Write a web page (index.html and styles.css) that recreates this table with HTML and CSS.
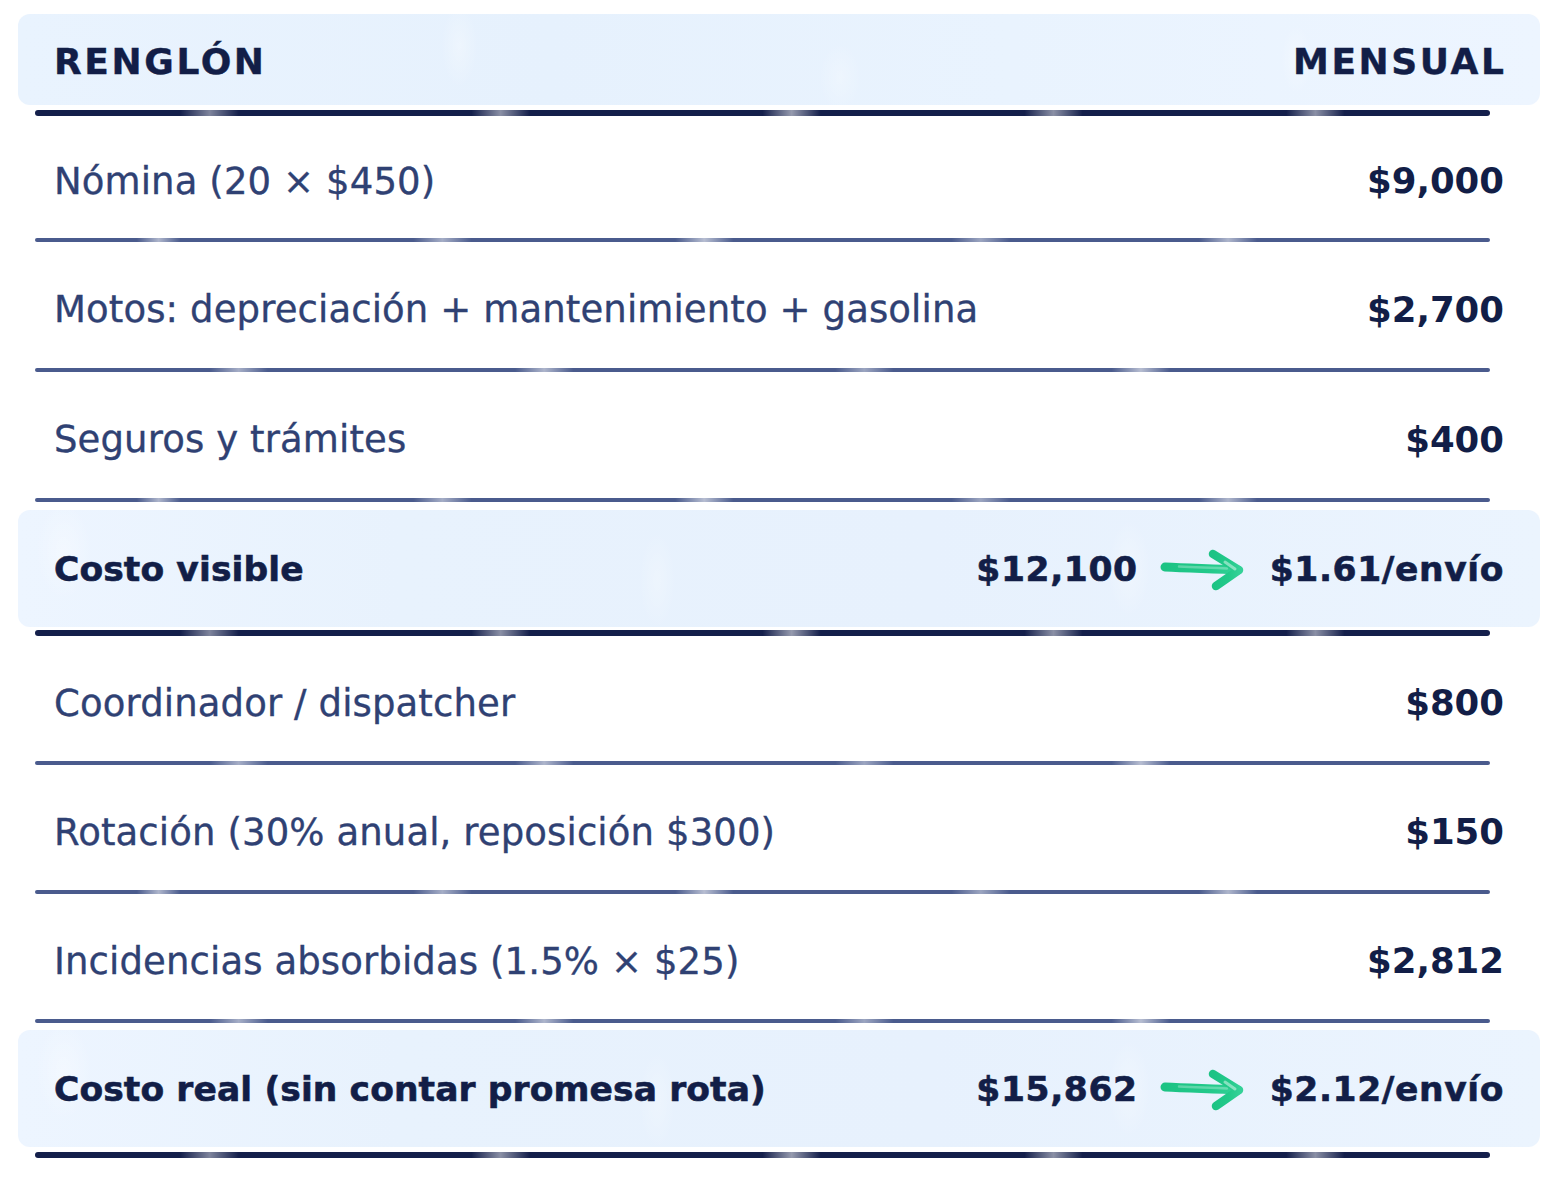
FILE: index.html
```html
<!DOCTYPE html>
<html lang="es">
<head>
<meta charset="utf-8">
<title>Costo de flota propia</title>
<link rel="stylesheet" href="styles.css">
</head>
<body>
<main class="cost-table">
  <div class="row row--head">
    <span class="head-label">RENGLÓN</span>
    <span class="head-label head-label--right">MENSUAL</span>
  </div>
  <div class="rule rule--dark rule--after-head"></div>

  <div class="row row--first">
    <span class="label">Nómina (20 × $450)</span>
    <span class="value">$9,000</span>
  </div>
  <div class="rule"></div>

  <div class="row">
    <span class="label">Motos: depreciación + mantenimiento + gasolina</span>
    <span class="value">$2,700</span>
  </div>
  <div class="rule rule--alt"></div>

  <div class="row">
    <span class="label">Seguros y trámites</span>
    <span class="value">$400</span>
  </div>
  <div class="rule"></div>

  <div class="row row--total">
    <span class="total-label">Costo visible</span>
    <span class="total-value">
      <span>$12,100</span>
      <svg class="arrow" viewBox="0 0 86 44" aria-hidden="true">
        <defs>
          <linearGradient id="arrowGrad1" x1="0" y1="0" x2="1" y2="0">
            <stop offset="0" stop-color="#1cc384"/>
            <stop offset="0.6" stop-color="#22c98a"/>
            <stop offset="1" stop-color="#34d197"/>
          </linearGradient>
        </defs>
        <path d="M6 19 C 30 20.5, 56 20.5, 79 22" fill="none" stroke="url(#arrowGrad1)" stroke-width="9" stroke-linecap="round"/>
        <path d="M54 6 L80 22 L57 38" fill="none" stroke="url(#arrowGrad1)" stroke-width="8.5" stroke-linecap="round" stroke-linejoin="round"/>
        <path d="M20 18.5 C 40 19.5, 55 19.5, 68 20.5" fill="none" stroke="#ffffff" stroke-opacity="0.28" stroke-width="2.5" stroke-linecap="round"/>
        <path d="M66 14 L76 21" fill="none" stroke="#ffffff" stroke-opacity="0.45" stroke-width="3" stroke-linecap="round"/>
      </svg>
      <span>$1.61/envío</span>
    </span>
  </div>
  <div class="rule rule--dark rule--after-total"></div>

  <div class="row row--mid">
    <span class="label">Coordinador / dispatcher</span>
    <span class="value">$800</span>
  </div>
  <div class="rule rule--alt"></div>

  <div class="row row--mid">
    <span class="label">Rotación (30% anual, reposición $300)</span>
    <span class="value">$150</span>
  </div>
  <div class="rule"></div>

  <div class="row row--mid">
    <span class="label">Incidencias absorbidas (1.5% × $25)</span>
    <span class="value">$2,812</span>
  </div>
  <div class="rule rule--alt"></div>

  <div class="row row--total row--total-last">
    <span class="total-label">Costo real (sin contar promesa rota)</span>
    <span class="total-value">
      <span>$15,862</span>
      <svg class="arrow" viewBox="0 0 86 44" aria-hidden="true">
        <defs>
          <linearGradient id="arrowGrad2" x1="0" y1="0" x2="1" y2="0">
            <stop offset="0" stop-color="#1cc384"/>
            <stop offset="0.6" stop-color="#22c98a"/>
            <stop offset="1" stop-color="#34d197"/>
          </linearGradient>
        </defs>
        <path d="M6 19 C 30 20.5, 56 20.5, 79 22" fill="none" stroke="url(#arrowGrad2)" stroke-width="9" stroke-linecap="round"/>
        <path d="M54 6 L80 22 L57 38" fill="none" stroke="url(#arrowGrad2)" stroke-width="8.5" stroke-linecap="round" stroke-linejoin="round"/>
        <path d="M20 18.5 C 40 19.5, 55 19.5, 68 20.5" fill="none" stroke="#ffffff" stroke-opacity="0.28" stroke-width="2.5" stroke-linecap="round"/>
        <path d="M66 14 L76 21" fill="none" stroke="#ffffff" stroke-opacity="0.45" stroke-width="3" stroke-linecap="round"/>
      </svg>
      <span>$2.12/envío</span>
    </span>
  </div>
  <div class="rule rule--dark rule--end"></div>
</main>
</body>
</html>
```

FILE: styles.css
```css
html, body {
  margin: 0;
  padding: 0;
  background: #ffffff;
}

body {
  font-family: "DejaVu Sans", "Noto Sans", sans-serif;
}

.cost-table {
  width: 1522px;
  margin: 14px 0 0 18px;
  display: flex;
  flex-direction: column;
}

.row {
  display: flex;
  align-items: center;
  justify-content: space-between;
  padding: 9px 36px 0;
  height: 126px;
  box-sizing: border-box;
}

.row--first {
  height: 122px;
  padding-top: 8px;
}

.row--mid {
  height: 125px;
}

.row--head {
  height: 91px;
  padding-top: 4px;
  border-radius: 12px;
  background:
    radial-gradient(ellipse 26px 60px at 29% 35%, rgba(255,255,255,0.3), rgba(255,255,255,0) 70%),
    radial-gradient(ellipse 30px 50px at 54% 70%, rgba(255,255,255,0.25), rgba(255,255,255,0) 70%),
    radial-gradient(ellipse 22px 50px at 84% 50%, rgba(255,255,255,0.3), rgba(255,255,255,0) 70%),
    linear-gradient(90deg, #e9f3fe 0%, #e6f1fd 35%, #e9f3fe 65%, #edf5ff 100%);
}

.row--total {
  height: 117px;
  margin-top: 8px;
  padding-top: 2px;
  border-radius: 12px;
  background:
    radial-gradient(ellipse 40px 70px at 3% 35%, rgba(255,255,255,0.35), rgba(255,255,255,0) 70%),
    radial-gradient(ellipse 26px 70px at 42% 60%, rgba(255,255,255,0.25), rgba(255,255,255,0) 70%),
    radial-gradient(ellipse 30px 70px at 73% 50%, rgba(255,255,255,0.3), rgba(255,255,255,0) 70%),
    linear-gradient(90deg, #edf5ff 0%, #e8f2fd 25%, #e7f1fd 60%, #ebf4fe 100%);
}

.row--total-last {
  margin-top: 7px;
}

.head-label {
  font-size: 36px;
  font-weight: 700;
  letter-spacing: 2.6px;
  color: #121e47;
  line-height: 1;
  -webkit-text-stroke: 0.4px #121e47;
}

.head-label--right {
  margin-right: -2.6px;
}

.label {
  font-size: 37px;
  font-weight: 400;
  letter-spacing: 0.12px;
  color: #2f4173;
  line-height: 1;
  -webkit-text-stroke: 0.35px #2f4173;
}

.value {
  font-size: 35.5px;
  font-weight: 700;
  color: #121e47;
  line-height: 1;
}

.total-label {
  font-size: 34.5px;
  font-weight: 700;
  letter-spacing: 0.1px;
  color: #121e47;
  line-height: 1;
  -webkit-text-stroke: 0.6px #121e47;
}

.total-value {
  display: flex;
  align-items: center;
  gap: 21px;
  font-size: 34.5px;
  font-weight: 700;
  letter-spacing: 0.6px;
  color: #121e47;
  line-height: 1;
  -webkit-text-stroke: 0.6px #121e47;
}

.arrow {
  width: 86px;
  height: 44px;
  display: block;
  margin-right: 4px;
}

.rule {
  width: 1455px;
  height: 4px;
  margin-left: 17px;
  border-radius: 2px;
  background:
    linear-gradient(90deg,
      rgba(255,255,255,0) 0%, rgba(255,255,255,0) 7%,
      rgba(255,255,255,0.55) 8.5%, rgba(255,255,255,0) 10%,
      rgba(255,255,255,0) 26%,
      rgba(255,255,255,0.5) 28%, rgba(255,255,255,0) 30%,
      rgba(255,255,255,0) 44%,
      rgba(255,255,255,0.6) 46%, rgba(255,255,255,0) 48%,
      rgba(255,255,255,0) 63%,
      rgba(255,255,255,0.45) 65%, rgba(255,255,255,0) 67%,
      rgba(255,255,255,0) 80%,
      rgba(255,255,255,0.55) 82%, rgba(255,255,255,0) 84%,
      rgba(255,255,255,0) 100%),
    #4a5b8d;
}

.rule--alt {
  background:
    linear-gradient(90deg,
      rgba(255,255,255,0) 0%, rgba(255,255,255,0) 12%,
      rgba(255,255,255,0.5) 14%, rgba(255,255,255,0) 16%,
      rgba(255,255,255,0) 33%,
      rgba(255,255,255,0.55) 35%, rgba(255,255,255,0) 37%,
      rgba(255,255,255,0) 55%,
      rgba(255,255,255,0.45) 57%, rgba(255,255,255,0) 59%,
      rgba(255,255,255,0) 74%,
      rgba(255,255,255,0.6) 76%, rgba(255,255,255,0) 78%,
      rgba(255,255,255,0) 100%),
    #4a5b8d;
}

.rule--dark {
  height: 6px;
  border-radius: 3px;
  background:
    linear-gradient(90deg,
      rgba(255,255,255,0) 0%, rgba(255,255,255,0) 10%,
      rgba(255,255,255,0.45) 12%, rgba(255,255,255,0) 14%,
      rgba(255,255,255,0) 30%,
      rgba(255,255,255,0.5) 32%, rgba(255,255,255,0) 34%,
      rgba(255,255,255,0) 50%,
      rgba(255,255,255,0.55) 52%, rgba(255,255,255,0) 54%,
      rgba(255,255,255,0) 68%,
      rgba(255,255,255,0.5) 70%, rgba(255,255,255,0) 72%,
      rgba(255,255,255,0) 86%,
      rgba(255,255,255,0.5) 88%, rgba(255,255,255,0) 90%,
      rgba(255,255,255,0) 100%),
    #141f4b;
}

.rule--after-head {
  margin-top: 5px;
}

.rule--after-total {
  margin-top: 3px;
}

.rule--end {
  margin-top: 5px;
}
```
